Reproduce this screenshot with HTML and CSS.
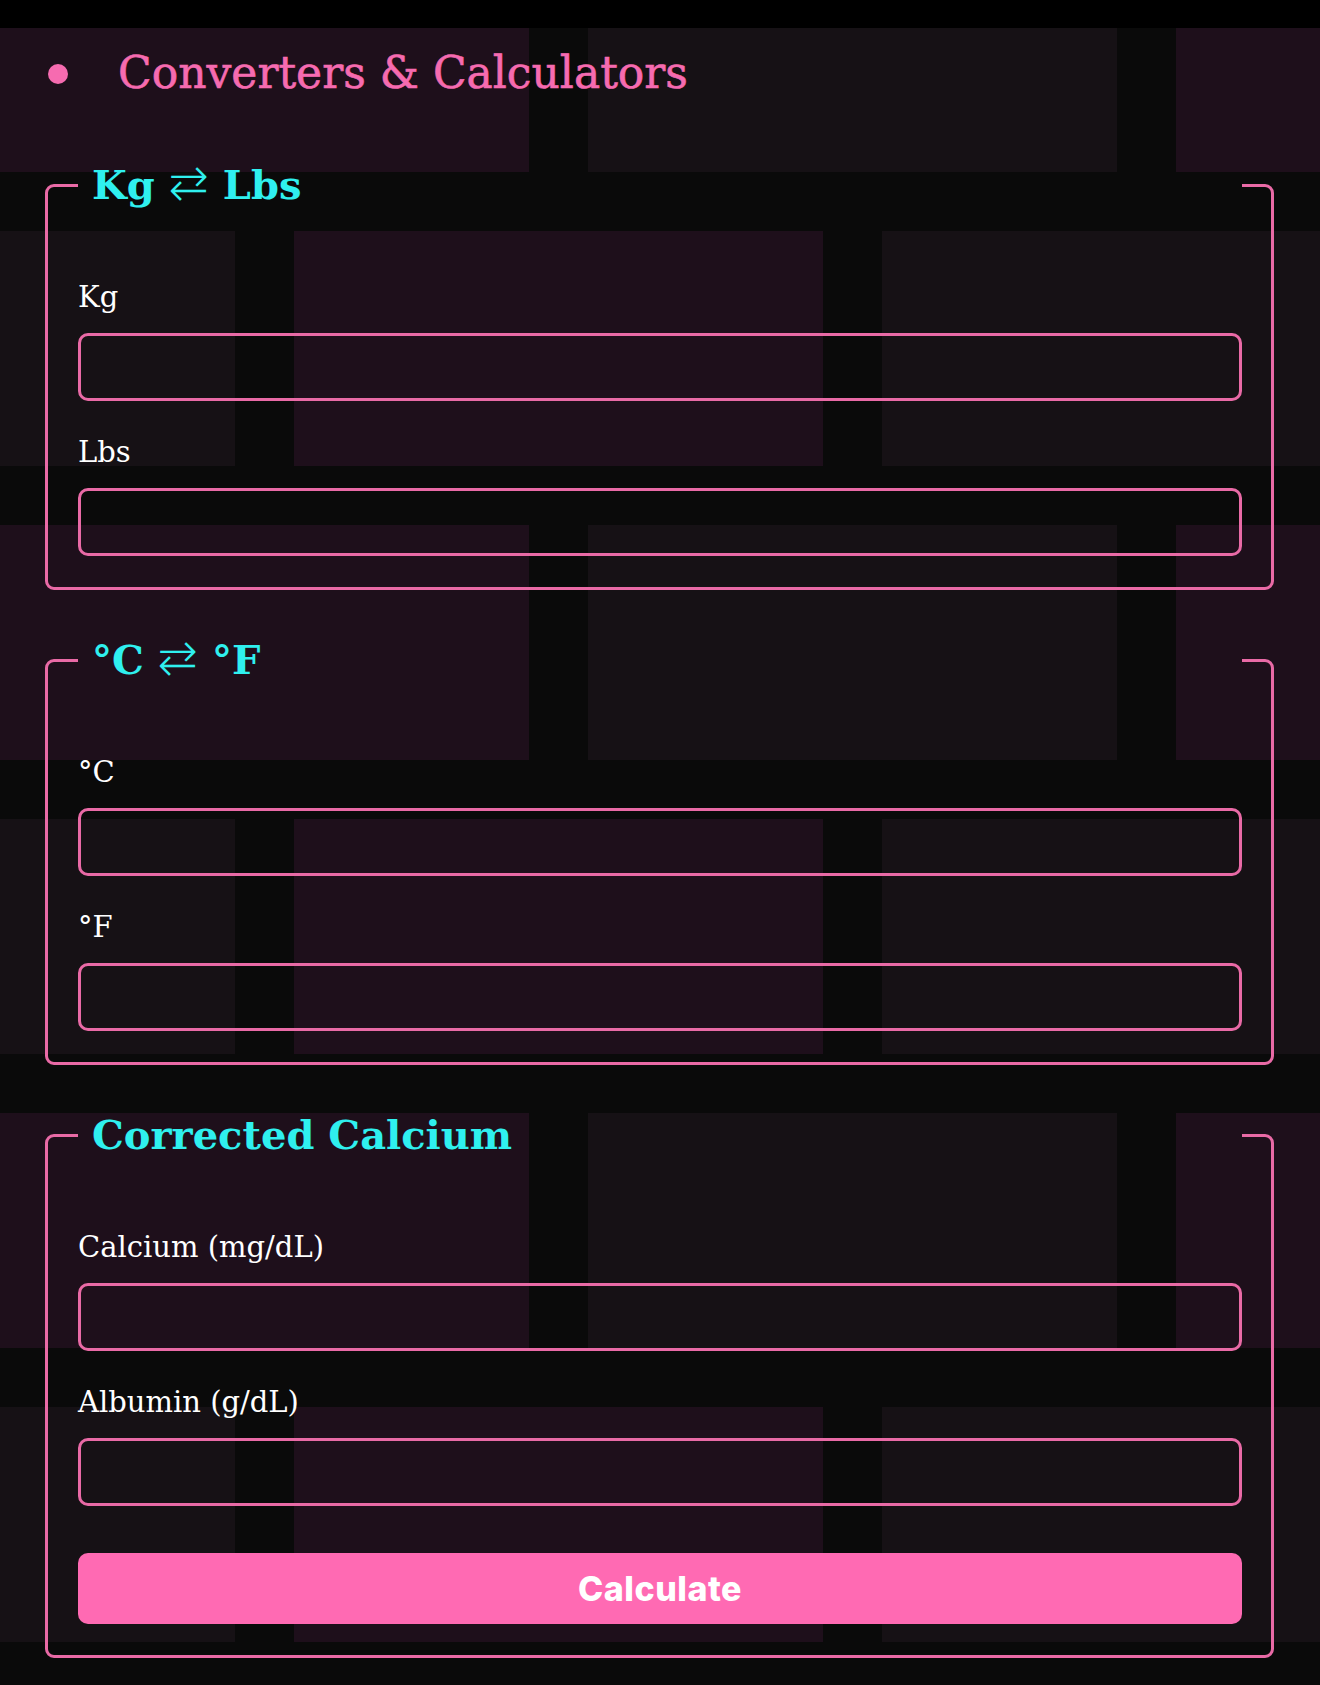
FILE: index.html
```html
<!DOCTYPE html>
<html lang="en">
<head>
<meta charset="utf-8">
<title>Converters &amp; Calculators</title>
<link rel="stylesheet" href="styles.css">
</head>
<body>
<div class="page">
  <main class="wrap">
    <h1 class="title"><span class="dot"></span><span class="title-text">Converters &amp; Calculators</span></h1>

    <fieldset class="card">
      <legend class="card-title">Kg <span class="swap">⇄</span> Lbs</legend>
      <label class="field">
        <span class="field-label">Kg</span>
        <input class="field-input" type="number">
      </label>
      <label class="field">
        <span class="field-label">Lbs</span>
        <input class="field-input" type="number">
      </label>
    </fieldset>

    <fieldset class="card">
      <legend class="card-title">°C <span class="swap">⇄</span> °F</legend>
      <label class="field">
        <span class="field-label">°C</span>
        <input class="field-input" type="number">
      </label>
      <label class="field">
        <span class="field-label">°F</span>
        <input class="field-input" type="number">
      </label>
    </fieldset>

    <fieldset class="card">
      <legend class="card-title">Corrected Calcium</legend>
      <label class="field">
        <span class="field-label">Calcium (mg/dL)</span>
        <input class="field-input" type="number">
      </label>
      <label class="field">
        <span class="field-label">Albumin (g/dL)</span>
        <input class="field-input" type="number">
      </label>
      <button class="btn" type="button">Calculate</button>
    </fieldset>
  </main>
</div>
</body>
</html>
```

FILE: styles.css
```css
html, body {
  margin: 0;
  padding: 0;
  background: #000;
}

.page {
  margin-top: 28px;
  min-height: calc(100vh - 28px);
  background-color: #0a0a0a;
  background-image:
    conic-gradient(at 529px 235px, transparent 75%, #1e0f1b 0),
    conic-gradient(at 529px 235px, transparent 75%, #161115 0),
    conic-gradient(at 529px 235px, transparent 75%, #161115 0),
    conic-gradient(at 529px 235px, transparent 75%, #1e0f1b 0);
  background-size: 1176px 588px;
  background-position:
    0px -91px,
    588px -91px,
    -294px 203px,
    294px 203px;
  background-repeat: repeat;
  color: #fff;
  font-family: "DejaVu Serif", serif;
}

.wrap {
  padding: 21px 46px 28px 45px;
}

.title {
  display: flex;
  align-items: center;
  gap: 50px;
  margin: 0 0 64px 3px;
  font-family: "DejaVu Serif", serif;
  font-weight: 400;
  font-size: 44px;
  line-height: 48px;
  color: #f66bb0;
  -webkit-text-stroke: 0.6px #f66bb0;
}

.dot {
  width: 20px;
  height: 20px;
  border-radius: 50%;
  background: #f66bb0;
  flex: none;
  margin-top: 2px;
}

.card {
  margin: 0 0 46px 0;
  padding: 67px 29px 31px 30px;
  border: 3px solid #e96aa6;
  border-radius: 9px;
  display: flex;
  flex-direction: column;
  gap: 30px;
  min-width: 0;
}

.card:last-child {
  margin-bottom: 0;
}

.card-title {
  width: 100%;
  box-sizing: border-box;
  padding: 0 14px;
  font-family: "DejaVu Serif", serif;
  font-weight: 700;
  font-size: 40px;
  line-height: 48px;
  color: #2ff0ef;
}

.swap {
  font-family: "DejaVu Sans", sans-serif;
  font-weight: 200;
  font-size: 48px;
  line-height: 0;
}

.field {
  display: flex;
  flex-direction: column;
  gap: 15px;
}

.field-label {
  font-size: 29px;
  line-height: 42px;
  color: #fff;
}

.field-input {
  box-sizing: border-box;
  width: 100%;
  height: 68px;
  margin: 0;
  padding: 0 16px;
  background: transparent;
  border: 3px solid #e96aa6;
  border-radius: 10px;
  color: #fff;
  font-family: "DejaVu Serif", serif;
  font-size: 26px;
  outline: none;
}

.btn {
  margin-top: 17px;
  height: 71px;
  width: 100%;
  border: none;
  border-radius: 10px;
  background: #ff6ab3;
  color: #fff;
  font-family: Inter, "Liberation Sans", sans-serif;
  font-weight: 800;
  font-size: 34px;
  letter-spacing: 0.5px;
  cursor: pointer;
}
```
